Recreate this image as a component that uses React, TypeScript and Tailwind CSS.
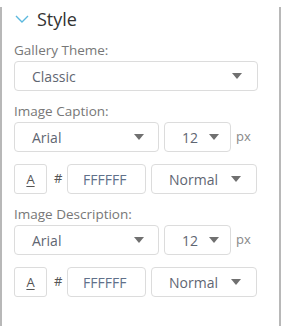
import React from "react";

const Arrow = () => (
  <svg width="10" height="6" viewBox="0 0 10 6" className="shrink-0">
    <polygon points="0,0 10,0 5,6" fill="#707070" />
  </svg>
);

const Select = ({ label, w, pr = "pr-[15px]" }: { label: string; w: string; pr?: string }) => (
  <div
    className={`${w} h-[30px] shrink-0 border border-[#dcdcdc] rounded-[4px] flex items-center justify-between pl-[17px] ${pr} text-[14px] text-[#5f6672]`}
  >
    <span>{label}</span>
    <Arrow />
  </div>
);

const Label = ({ children }: { children: React.ReactNode }) => (
  <div className="h-[16px] leading-[16px] text-[13.5px] text-[#777] mb-[3px]">{children}</div>
);

const FontRow = () => (
  <div className="flex items-center">
    <Select label="Arial" w="w-[145px]" pr="pr-[14px]" />
    <div className="w-[5px]" />
    <Select label="12" w="w-[67px]" pr="pr-[11px]" />
    <span className="ml-[5px] text-[13px] text-[#888]">px</span>
  </div>
);

const ColorRow = () => (
  <div className="flex items-center mt-[12px]">
    <div className="w-[33px] h-[30px] shrink-0 border border-[#dcdcdc] rounded-[3px] flex items-center justify-center">
      <span className="text-[13px] text-[#555] underline underline-offset-2 leading-none">A</span>
    </div>
    <span className="ml-[7px] w-[13px] text-[13px] text-[#555]">#</span>
    <div className="w-[79px] h-[30px] shrink-0 border border-[#dcdcdc] rounded-[4px] flex items-center pl-[15px] text-[14px] text-[#60708a]">
      FFFFFF
    </div>
    <div className="w-[5px]" />
    <Select label="Normal" w="w-[106px]" />
  </div>
);

export default function App() {
  return (
    <div
      className="w-[281px] h-[326px] border-x-2 border-b-2 border-[#b8b8b8] bg-white pl-[12px]"
      style={{ fontFamily: "'Open Sans', Lato, sans-serif" }}
    >
      <div className="h-[24px] mt-[7px] flex items-center">
        <svg width="14" height="8" viewBox="0 0 14 8" className="ml-[1px]">
          <polyline points="1,1 7,7 13,1" fill="none" stroke="#5bb8de" strokeWidth="1.4" />
        </svg>
        <span className="ml-[8px] text-[18px] leading-[24px] text-[#333]">Style</span>
      </div>
      <div className="mt-[11px]">
        <Label>Gallery Theme:</Label>
        <Select label="Classic" w="w-[244px]" />
      </div>
      <div className="mt-[12px]">
        <Label>Image Caption:</Label>
        <FontRow />
        <ColorRow />
      </div>
      <div className="mt-[12px]">
        <Label>Image Description:</Label>
        <FontRow />
        <ColorRow />
      </div>
    </div>
  );
}
